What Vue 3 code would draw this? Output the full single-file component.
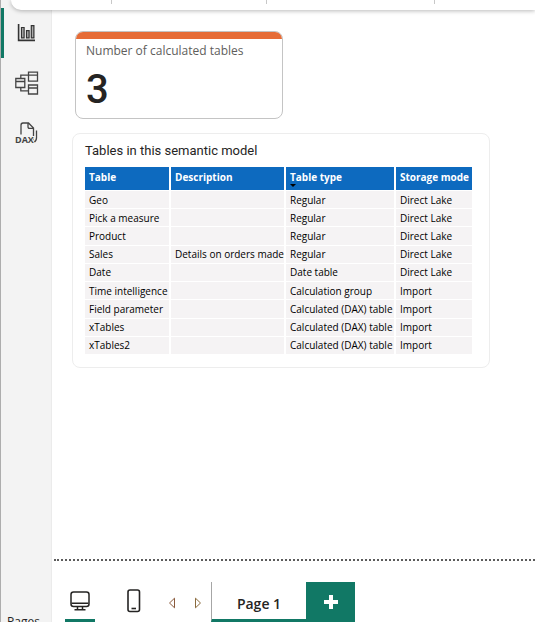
<script setup>
const rows = [
  ['Geo', '', 'Regular', 'Direct Lake'],
  ['Pick a measure', '', 'Regular', 'Direct Lake'],
  ['Product', '', 'Regular', 'Direct Lake'],
  ['Sales', 'Details on orders made', 'Regular', 'Direct Lake'],
  ['Date', '', 'Date table', 'Direct Lake'],
  ['Time intelligence', '', 'Calculation group', 'Import'],
  ['Field parameter', '', 'Calculated (DAX) table', 'Import'],
  ['xTables', '', 'Calculated (DAX) table', 'Import'],
  ['xTables2', '', 'Calculated (DAX) table', 'Import'],
]
</script>

<template>
  <div class="shell">
    <header class="ribbon"><i></i><i></i><i></i></header>

    <nav class="rail">
      <button class="view active" aria-label="Report view">
        <svg width="20" height="20" viewBox="0 0 20 20" fill="none" stroke="#333" stroke-width="1.2">
          <path d="M1.600 1v16.400H18" stroke-width="1.600" />
          <path d="M4.500 4.500h2.600v10.300H4.500zM9.500 7.600h2.600v7.200H9.500zM14.300 2.600h2.600v12.200h-2.600z" fill="#aaa" />
        </svg>
      </button>
      <button class="view" aria-label="Table view">
        <svg width="24" height="24" viewBox="0 0 24 24" fill="none" stroke="#444" stroke-width="1.3">
          <path d="M13.500 1.200h9v9h-9zM13.500 14h9v9h-9zM.8 7.500h9v9h-9zM13.500 4.200h9M13.500 17h9M.8 10.500h9M5.800 7.500V4.200h7.700M5.800 16.500V19.800h7.700" />
        </svg>
      </button>
      <button class="view" aria-label="DAX query view">
        <svg width="24" height="22" viewBox="0 0 24 22" fill="none" stroke="#444" stroke-width="1.3">
          <path d="M6 12.500V3.200Q6 1 8 1h5.500l5 5v9q0 3.500-3 5M13 1.200v3.600q0 1.500 1.500 1.500h4M21.500 8.500v7.500q0 3-3 4.500" />
          <text x="0" y="20.500" class="dax">DAX</text>
        </svg>
      </button>
      <span class="page-label">Pages</span>
    </nav>

    <main class="canvas">
      <section class="card">
        <h2>Number of calculated tables</h2>
        <p>3</p>
      </section>

      <section class="panel">
        <h2>Tables in this semantic model</h2>
        <table>
          <colgroup><col class="c1" /><col class="c2" /><col class="c3" /><col class="c4" /></colgroup>
          <thead>
            <tr>
              <th>Table</th>
              <th>Description</th>
              <th class="sorted">Table type</th>
              <th>Storage mode</th>
            </tr>
          </thead>
          <tbody>
            <tr v-for="row in rows" :key="row[0]">
              <td v-for="(cell, i) in row" :key="i">{{ cell }}</td>
            </tr>
          </tbody>
        </table>
      </section>
    </main>

    <footer class="pages">
      <div class="devices">
        <button class="device current" aria-label="Desktop layout">
          <svg width="20" height="20" viewBox="0 0 20 20" fill="none" stroke="#252423" stroke-width="1.5">
            <rect x="1" y="1" width="18" height="14.500" rx="2.500" />
            <path d="M1.500 12.300h17M7.500 15.500V18M12.500 15.500V18M4.500 18.700h11" />
          </svg>
        </button>
        <button class="device" aria-label="Mobile layout">
          <svg width="14" height="24" viewBox="0 0 14 24" fill="none" stroke="#252423" stroke-width="1.6">
            <rect x="1" y="1" width="11.500" height="21.500" rx="2" />
            <path d="M4.500 19.500h4.500" />
          </svg>
        </button>
      </div>
      <div class="arrows">
        <button aria-label="Previous page">
          <svg width="8" height="12" viewBox="0 0 8 12" fill="none"><path d="M6.500 1.200v9.600L1.500 6z" stroke="#8a5a3c" /></svg>
        </button>
        <button aria-label="Next page">
          <svg width="8" height="12" viewBox="0 0 8 12" fill="none"><path d="M1.500 1.200v9.600L6.500 6z" stroke="#8a6a3c" /></svg>
        </button>
      </div>
      <button class="tab">Page 1</button>
      <button class="add" aria-label="New page">
        <svg width="14" height="14" viewBox="0 0 14 14"><path d="M7 0v14M0 7h14" stroke="#fff" stroke-width="4" /></svg>
      </button>
    </footer>
  </div>
</template>

<style>
body {
  margin: 0;
}
</style>

<style scoped>
* {
  box-sizing: border-box;
}
.shell {
  display: grid;
  grid-template-columns: 52px minmax(0, 1fr);
  grid-template-rows: 10px minmax(0, 1fr) auto;
  height: 100vh;
  overflow: hidden;
  background: #fff;
  font-family: "Open Sans", "Noto Sans", sans-serif;
  color: #252423;
}
button {
  border: 0;
  padding: 0;
  background: none;
  font: inherit;
  color: inherit;
}
svg {
  display: block;
}
.ribbon {
  grid-area: 1 / 1 / 2 / 3;
  z-index: 1;
  display: grid;
  grid-template-columns: 101px 155px 168px;
  margin-left: 11px;
  background: #fff;
  border-bottom-left-radius: 10px;
  box-shadow: 0 1px 4px rgba(0, 0, 0, 0.28);
}
.ribbon i {
  height: 4px;
  border-right: 1px solid #c8c8c8;
}
.rail {
  grid-area: 1 / 1 / 4 / 2;
  display: flex;
  flex-direction: column;
  min-height: 0;
  padding-top: 8px;
  background: #f3f3f3;
  border-left: 1px solid #adadad;
  border-right: 1px solid #ebebeb;
}
.view {
  flex: none;
  display: grid;
  place-items: center;
  height: 50px;
  padding-right: 2px;
  border-left: 3px solid transparent;
}
.view.active {
  border-left-color: #117865;
}
.dax {
  font: 700 9px "Open Sans", sans-serif;
  fill: #444;
  stroke: #f3f3f3;
  stroke-width: 2px;
  paint-order: stroke;
}
.page-label {
  flex: none;
  margin-top: auto;
  margin-bottom: -10px;
  padding-left: 6px;
  font-size: 12px;
  line-height: 20px;
}
.canvas {
  grid-area: 2 / 2 / 3 / 3;
  display: flex;
  flex-direction: column;
  align-items: flex-start;
  gap: 14px;
  min-height: 0;
  margin-left: 2px;
  padding: 21px 18px 0;
  border-bottom: 2px dotted #5c5c5c;
}
.card {
  width: 208px;
  margin-left: 3px;
  padding-bottom: 4px;
  border: 1px solid #c4c4c4;
  border-radius: 8px;
  overflow: hidden;
}
.card::before {
  content: "";
  display: block;
  height: 7px;
  background: #e66c37;
}
h2,
p {
  margin: 0;
}
.card h2 {
  padding: 3px 10px;
  font: 400 12px/18px "Open Sans", sans-serif;
  color: #605e5c;
}
.card p {
  padding: 2px 10px 0;
  font: 500 40px/49px Roboto, sans-serif;
}
.panel {
  width: 418px;
  max-width: 100%;
  padding: 8px 16px 12px 12px;
  border: 1px solid #ededed;
  border-radius: 8px;
}
.panel h2 {
  font: 400 13px/18px Roboto, sans-serif;
}
table {
  height: 188px;
  margin-top: 7px;
  border-collapse: separate;
  border-spacing: 0;
  table-layout: fixed;
  width: 387px;
  font-size: 10px;
  line-height: 14px;
  color: #000;
}
.c1 {
  width: 86px;
}
.c2 {
  width: 115px;
}
.c3 {
  width: 110px;
}
.c4 {
  width: 76px;
}
th,
td {
  padding: 1px 0 1px 4px;
  text-align: left;
  white-space: nowrap;
  border-right: 2px solid #fff;
  border-bottom: 1px solid #fff;
}
th:last-child,
td:last-child {
  border-right: 0;
}
td {
  background: #f5f3f4;
}
th {
  position: relative;
  height: 24px;
  padding: 3px 0 6px 4px;
  vertical-align: top;
  background: #0d6abf;
  color: #fff;
}
.sorted::after {
  content: "";
  position: absolute;
  left: 4px;
  bottom: 3px;
  border: 3px solid transparent;
  border-top-color: #000;
  border-bottom: 0;
}
.pages {
  grid-area: 3 / 2 / 4 / 3;
  display: flex;
  height: 61px;
  padding: 21px 0 0 13px;
}
.devices,
.arrows {
  display: flex;
}
.devices {
  gap: 24px;
  margin-right: 10px;
}
.device,
.arrows button,
.tab,
.add {
  display: grid;
  place-items: center;
}
.device {
  width: 30px;
  border-bottom: 3px solid transparent;
}
.device.current {
  border-bottom-color: #117865;
}
.arrows button {
  width: 26px;
  padding-top: 2px;
}
.tab {
  width: 95px;
  padding-top: 6px;
  border-left: 1px solid #a6a6a6;
  border-bottom: 3px solid #117865;
  font-size: 14px;
  font-weight: 600;
}
.add {
  width: 49px;
  background: #117865;
}
</style>
